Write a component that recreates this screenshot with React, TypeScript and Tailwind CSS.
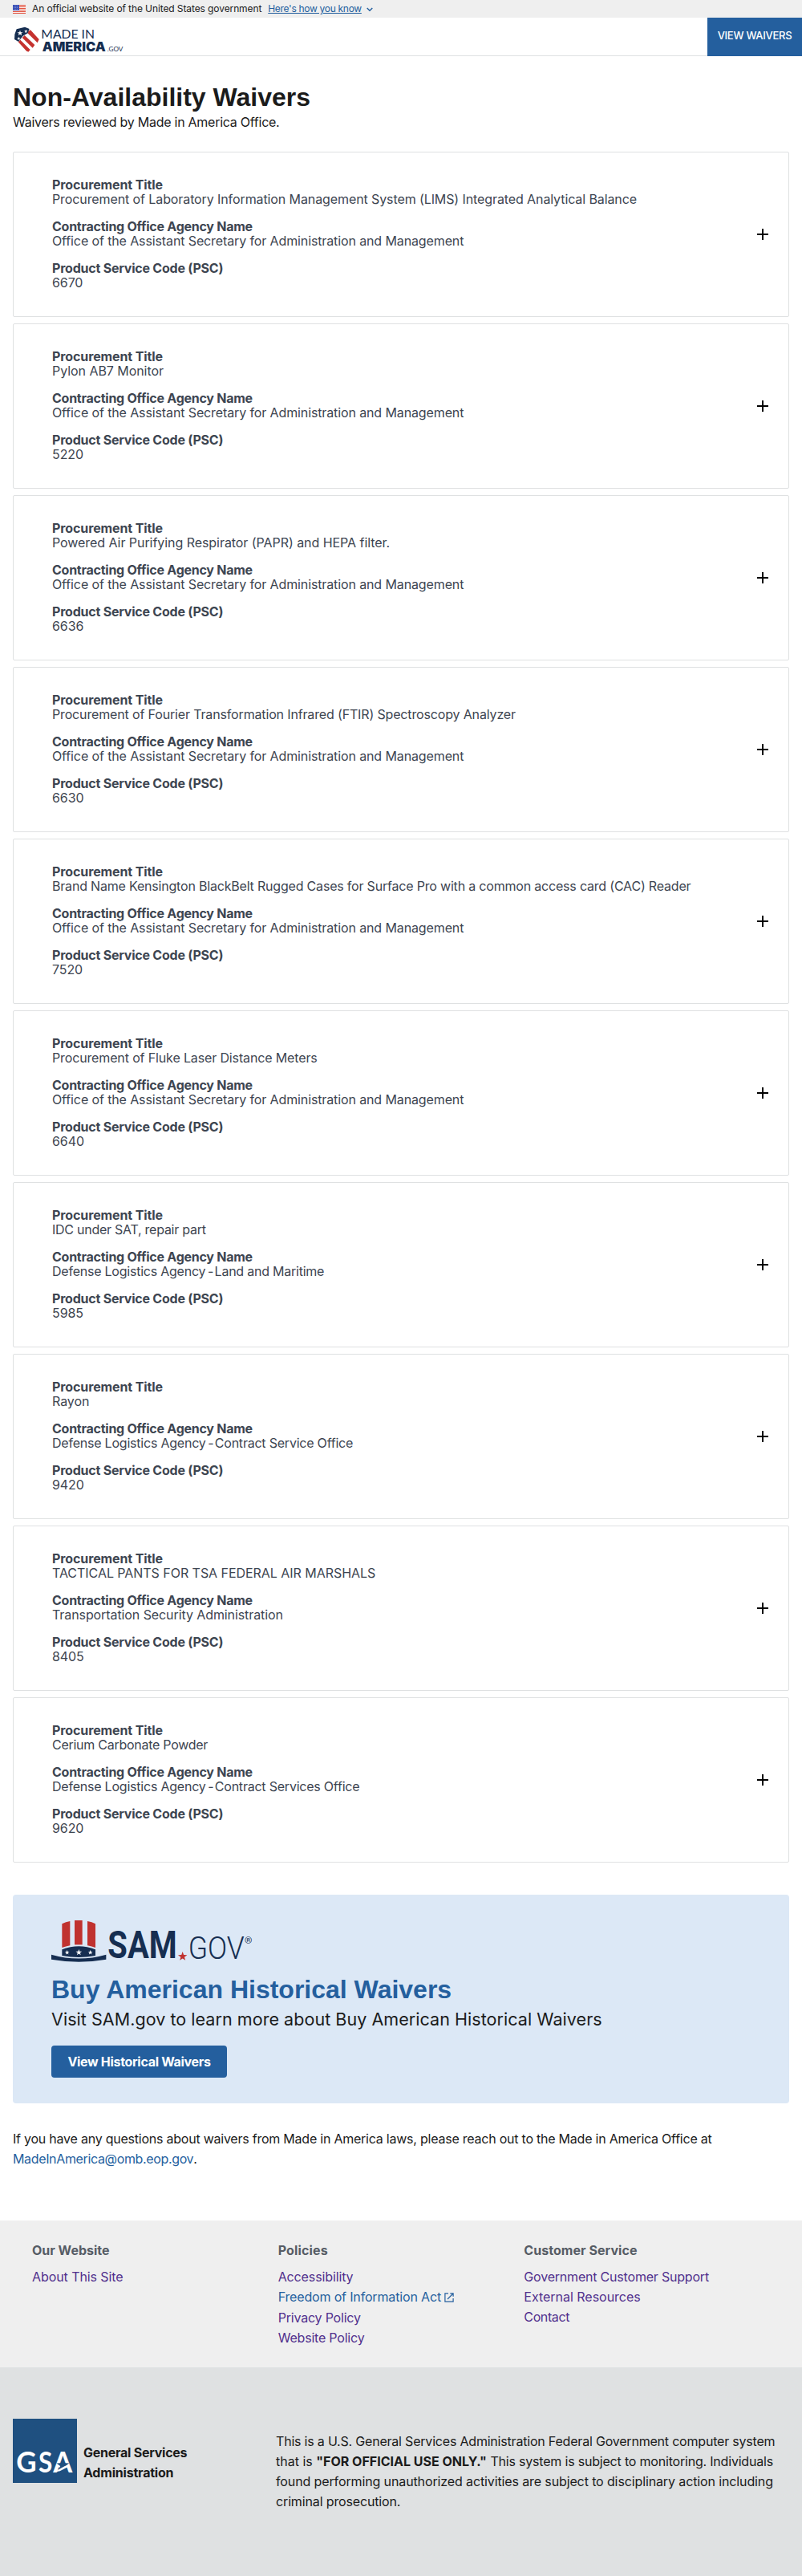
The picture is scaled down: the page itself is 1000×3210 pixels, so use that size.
type Waiver = { title: string; titleClass: string; agency: string; office?: string; agencyClass: string; psc: string };

const ASAM = "Office of the Assistant Secretary for Administration and Management";
const DLA = "Defense Logistics Agency";

const waivers: Waiver[] = [
  { title: "Procurement of Laboratory Information Management System (LIMS) Integrated Analytical Balance", titleClass: "tracking-[-0.1px]", agency: ASAM, agencyClass: "tracking-[-0.118px]", psc: "6670" },
  { title: "Pylon AB7 Monitor", titleClass: "tracking-[-0.051px]", agency: ASAM, agencyClass: "tracking-[-0.118px]", psc: "5220" },
  { title: "Powered Air Purifying Respirator (PAPR) and HEPA filter.", titleClass: "tracking-[-0.054px]", agency: ASAM, agencyClass: "tracking-[-0.118px]", psc: "6636" },
  { title: "Procurement of Fourier Transformation Infrared (FTIR) Spectroscopy Analyzer", titleClass: "tracking-[-0.151px]", agency: ASAM, agencyClass: "tracking-[-0.118px]", psc: "6630" },
  { title: "Brand Name Kensington BlackBelt Rugged Cases for Surface Pro with a common access card (CAC) Reader", titleClass: "tracking-[-0.193px]", agency: ASAM, agencyClass: "tracking-[-0.118px]", psc: "7520" },
  { title: "Procurement of Fluke Laser Distance Meters", titleClass: "tracking-[-0.138px]", agency: ASAM, agencyClass: "tracking-[-0.118px]", psc: "6640" },
  { title: "IDC under SAT, repair part", titleClass: "tracking-[-0.255px]", agency: DLA, office: "Land and Maritime", agencyClass: "tracking-[-0.23px]", psc: "5985" },
  { title: "Rayon", titleClass: "tracking-[-0.061px]", agency: DLA, office: "Contract Service Office", agencyClass: "tracking-[-0.22px]", psc: "9420" },
  { title: "TACTICAL PANTS FOR TSA FEDERAL AIR MARSHALS", titleClass: "tracking-[-0.044px]", agency: "Transportation Security Administration", agencyClass: "tracking-[-0.088px]", psc: "8405" },
  { title: "Cerium Carbonate Powder", titleClass: "tracking-[-0.268px]", agency: DLA, office: "Contract Services Office", agencyClass: "tracking-[-0.22px]", psc: "9620" },
];

function star(cx: number, cy: number, r: number) {
  return Array.from({ length: 10 }, (_, i) => {
    const a = -Math.PI / 2 + (i * Math.PI) / 5;
    const q = i % 2 ? r * 0.4 : r;
    return `${(cx + q * Math.cos(a)).toFixed(2)},${(cy + q * Math.sin(a)).toFixed(2)}`;
  }).join(" ");
}

function Flag() {
  return (
    <svg width="16" height="11" viewBox="0 0 16 11" className="block">
      <rect width="16" height="11" fill="#fff" />
      {[0, 2, 4, 6, 8, 10].map((y) => (
        <rect key={y} y={y} width="16" height="1.1" fill="#e0523f" />
      ))}
      <rect width="8" height="7" fill="#3a50b5" />
      {[1.5, 3.5, 5.5].map((y) => [1.5, 3.5, 5.5].map((x) => <circle key={`${x}${y}`} cx={x + 0.3} cy={y} r="0.45" fill="#c6cdf0" />))}
    </svg>
  );
}

function MadeInAmericaLogo() {
  return (
    <svg width="137" height="33" viewBox="51 99 411 99" className="block overflow-visible">
      <g fill="#c5322f">
        <polygon points="114,112 146,147 140,160 100,121" />
        <polygon points="92,132 130,168 122,179 83,141" />
        <polygon points="76,149 113,186 106,194 98,190 68,157" />
      </g>
      <polygon points="62,109 93,101 110,108 104,124 86,134 69,156 54,147 55,128" fill="#162e51" />
      <polygon points={star(75, 124, 11)} fill="#fff" />
      <polygon points={star(97, 117, 7)} fill="#fff" />
      <polygon points={star(70, 144, 7)} fill="#fff" />
      <g fill="#162e51">
        <text x="154" y="143" fontFamily="Lato" fontSize="48" textLength="200" lengthAdjust="spacingAndGlyphs">MADE IN</text>
        <text x="158" y="191" fontFamily="Inter" fontWeight="900" fontSize="47" textLength="237" lengthAdjust="spacingAndGlyphs">AMERICA</text>
        <text x="401" y="191" fontFamily="Lato" fontSize="25" textLength="59" lengthAdjust="spacingAndGlyphs">.GOV</text>
      </g>
    </svg>
  );
}

function SamLogo() {
  return (
    <svg width="251" height="53" viewBox="192 279 753 159" className="block overflow-visible">
      <g fill="#c0322f">
        <path d="M232 292Q246 284 262 282V373Q246 376 232 381Z" />
        <path d="M279 279H308V370H279Z" />
        <path d="M327 282Q344 285 357 292V381Q344 376 327 373Z" />
        <polygon points={star(683, 414, 18)} />
      </g>
      <g fill="#162e51">
        <path d="M232 388Q295 363 357 388V411Q295 423 232 411Z" />
        <path d="M192 407Q295 436 397 407V425Q295 443 192 425Z" />
        <text x="403" y="420" fontFamily="Roboto" fontWeight="700" fontSize="147" textLength="259" lengthAdjust="spacingAndGlyphs">SAM</text>
        <text x="704" y="423" fontFamily="Roboto" fontWeight="300" fontSize="116" textLength="210" lengthAdjust="spacingAndGlyphs">GOV</text>
        <text x="915" y="367" fontFamily="Roboto" fontSize="34" textLength="28" lengthAdjust="spacingAndGlyphs">®</text>
      </g>
      <g fill="#fff">
        <polygon points={star(251, 399, 9)} />
        <polygon points={star(295, 399, 12)} />
        <polygon points={star(338, 399, 9)} />
      </g>
    </svg>
  );
}

function GsaLogo() {
  return (
    <svg width="80" height="80" viewBox="0 0 240 240" className="block shrink-0">
      <rect width="240" height="240" fill="#1f5080" />
      <g fill="#fff" fontFamily="Lato" fontWeight="700" fontSize="106">
        <text x="13" y="200" textLength="76" lengthAdjust="spacingAndGlyphs">G</text>
        <text x="96" y="200" textLength="52" lengthAdjust="spacingAndGlyphs">S</text>
        <text x="151" y="200" textLength="72" lengthAdjust="spacingAndGlyphs">A</text>
      </g>
      <polygon points={star(187, 174, 25)} fill="#1f5080" />
      <path d="M152 200L196 176L205 181L176 196Z" fill="#fff" />
    </svg>
  );
}

function WaiverCard({ w }: { w: Waiver }) {
  return (
    <section className="flex h-[206px] items-center justify-between rounded-[2px] border border-[#dfe1e2] pl-12 pr-[25px] text-base leading-[18px] text-[#3d4551]">
      <dl className="flex flex-col gap-4 pb-0.5">
        <div>
          <dt className="font-bold tracking-[-0.11px]">Procurement Title</dt>
          <dd className={w.titleClass}>{w.title}</dd>
        </div>
        <div>
          <dt className="font-bold tracking-[-0.253px]">Contracting Office Agency Name</dt>
          <dd className={w.agencyClass}>
            {w.agency}
            {w.office && (
              <>
                <span className="tracking-[-1.7px]"> - </span>
                {w.office}
              </>
            )}
          </dd>
        </div>
        <div>
          <dt className="font-bold tracking-[-0.22px]">Product Service Code (PSC)</dt>
          <dd className="tracking-[-0.1px]">{w.psc}</dd>
        </div>
      </dl>
      <svg width="14" height="14" viewBox="0 0 14 14" shapeRendering="crispEdges">
        <path d="M6 0H8V6H14V8H8V14H6V8H0V6H6Z" fill="#000" />
      </svg>
    </section>
  );
}

function ExternalIcon() {
  return (
    <svg width="12" height="12" viewBox="0 0 12 12" fill="none" stroke="#245f9e" strokeWidth="1.2" className="mt-[7px]">
      <path d="M5 0.9H0.9V11.1H11.1V7" />
      <path d="M7.3 0.9H11.1V4.7M11 1L4 8" />
    </svg>
  );
}

export default function App() {
  return (
    <div className="min-h-[3210px] w-full bg-white font-['Inter',sans-serif] text-base text-[#1b1b1b]">
      <div className="flex h-[22px] items-center bg-[#efefef] px-4 text-xs">
        <Flag />
        <span className="ml-2 tracking-[-0.1px]">An official website of the United States government</span>
        <a className="ml-2 tracking-[-0.3px] text-[#245f9e] underline">Here's how you know</a>
        <svg width="8" height="6" viewBox="0 0 8 6" fill="none" stroke="#245f9e" strokeWidth="1.4" className="ml-1.5 mt-0.5">
          <path d="M0.7 1L4 4.3L7.3 1" />
        </svg>
      </div>
      <header className="flex h-12 items-start justify-between border-b border-[#dfe1e2]">
        <div className="pl-[17px] pt-[11px]">
          <MadeInAmericaLogo />
        </div>
        <a className="flex h-12 w-[118px] items-center justify-center bg-[#245f9e] pb-[2px] text-[13px] font-medium tracking-[-0.27px] text-white">VIEW WAIVERS</a>
      </header>
      <main className="px-4">
        <h1 className="pt-[33px] font-['Liberation_Sans'] text-[32px] font-bold leading-[36px]">Non-Availability Waivers</h1>
        <p className="pt-[1px] leading-[25px] tracking-[-0.257px]">Waivers reviewed by Made in America Office.</p>
        <div className="mt-6 flex flex-col gap-2">
          {waivers.map((w) => (
            <WaiverCard key={w.title} w={w} />
          ))}
        </div>
        <section className="mt-10 h-[260px] rounded bg-[#dce8f6] px-12 pt-8">
          <SamLogo />
          <h2 className="mt-[14px] font-['Liberation_Sans'] text-[32px] font-bold leading-[38px] text-[#245f9e]">Buy American Historical Waivers</h2>
          <p className="mt-[3px] text-[21.5px] leading-[30px] tracking-[0.05px]">Visit SAM.gov to learn more about Buy American Historical Waivers</p>
          <a className="mt-[18px] flex h-10 w-[219px] items-center justify-center rounded bg-[#245f9e] pb-px font-bold tracking-[-0.31px] text-white">View Historical Waivers</a>
        </section>
        <p className="mt-8 leading-[25px] tracking-[-0.232px]">
          If you have any questions about waivers from Made in America laws, please reach out to the Made in America Office at
          <br />
          <a className="tracking-[-0.35px] text-[#245f9e]">MadeInAmerica@omb.eop.gov</a>.
        </p>
      </main>
      <footer className="mt-[64px]">
        <nav className="grid h-[183px] grid-cols-3 bg-[#efefef] px-10 pt-[25px] leading-[25px]">
          <div>
            <h3 className="mb-2 font-bold text-[#565c65]">Our Website</h3>
            <a className="block tracking-[-0.08px] text-[#51308d]">About This Site</a>
          </div>
          <div>
            <h3 className="mb-2 font-bold tracking-[0.14px] text-[#565c65]">Policies</h3>
            <a className="block tracking-[-0.12px] text-[#51308d]">Accessibility</a>
            <a className="flex h-[26px] items-start gap-1 tracking-[-0.16px] text-[#245f9e]">
              Freedom of Information Act
              <ExternalIcon />
            </a>
            <a className="block tracking-[-0.2px] text-[#51308d]">Privacy Policy</a>
            <a className="block tracking-[-0.2px] text-[#51308d]">Website Policy</a>
          </div>
          <div>
            <h3 className="mb-2 font-bold tracking-[0.05px] text-[#565c65]">Customer Service</h3>
            <a className="block tracking-[-0.2px] text-[#51308d]">Government Customer Support</a>
            <a className="block tracking-[-0.02px] text-[#51308d]">External Resources</a>
            <a className="block tracking-[-0.39px] text-[#51308d]">Contact</a>
          </div>
        </nav>
        <div className="flex h-[260px] items-start bg-[#dfe1e2] px-4 pt-16 leading-[25px]">
          <GsaLogo />
          <p className="ml-2 w-[240px] pt-[30px] font-bold">
            <span className="tracking-[-0.255px]">General Services</span>
            <br />
            <span className="tracking-[-0.21px]">Administration</span>
          </p>
          <p className="whitespace-nowrap pt-4">
            <span className="tracking-[-0.2px]">This is a U.S. General Services Administration Federal Government computer system</span>
            <br />
            that is <b>"FOR OFFICIAL USE ONLY."</b> <span className="tracking-[-0.197px]">This system is subject to monitoring. Individuals</span>
            <br />
            <span className="tracking-[-0.12px]">found performing unauthorized activities are subject to disciplinary action including</span>
            <br />
            <span className="tracking-[-0.14px]">criminal prosecution.</span>
          </p>
        </div>
      </footer>
    </div>
  );
}
